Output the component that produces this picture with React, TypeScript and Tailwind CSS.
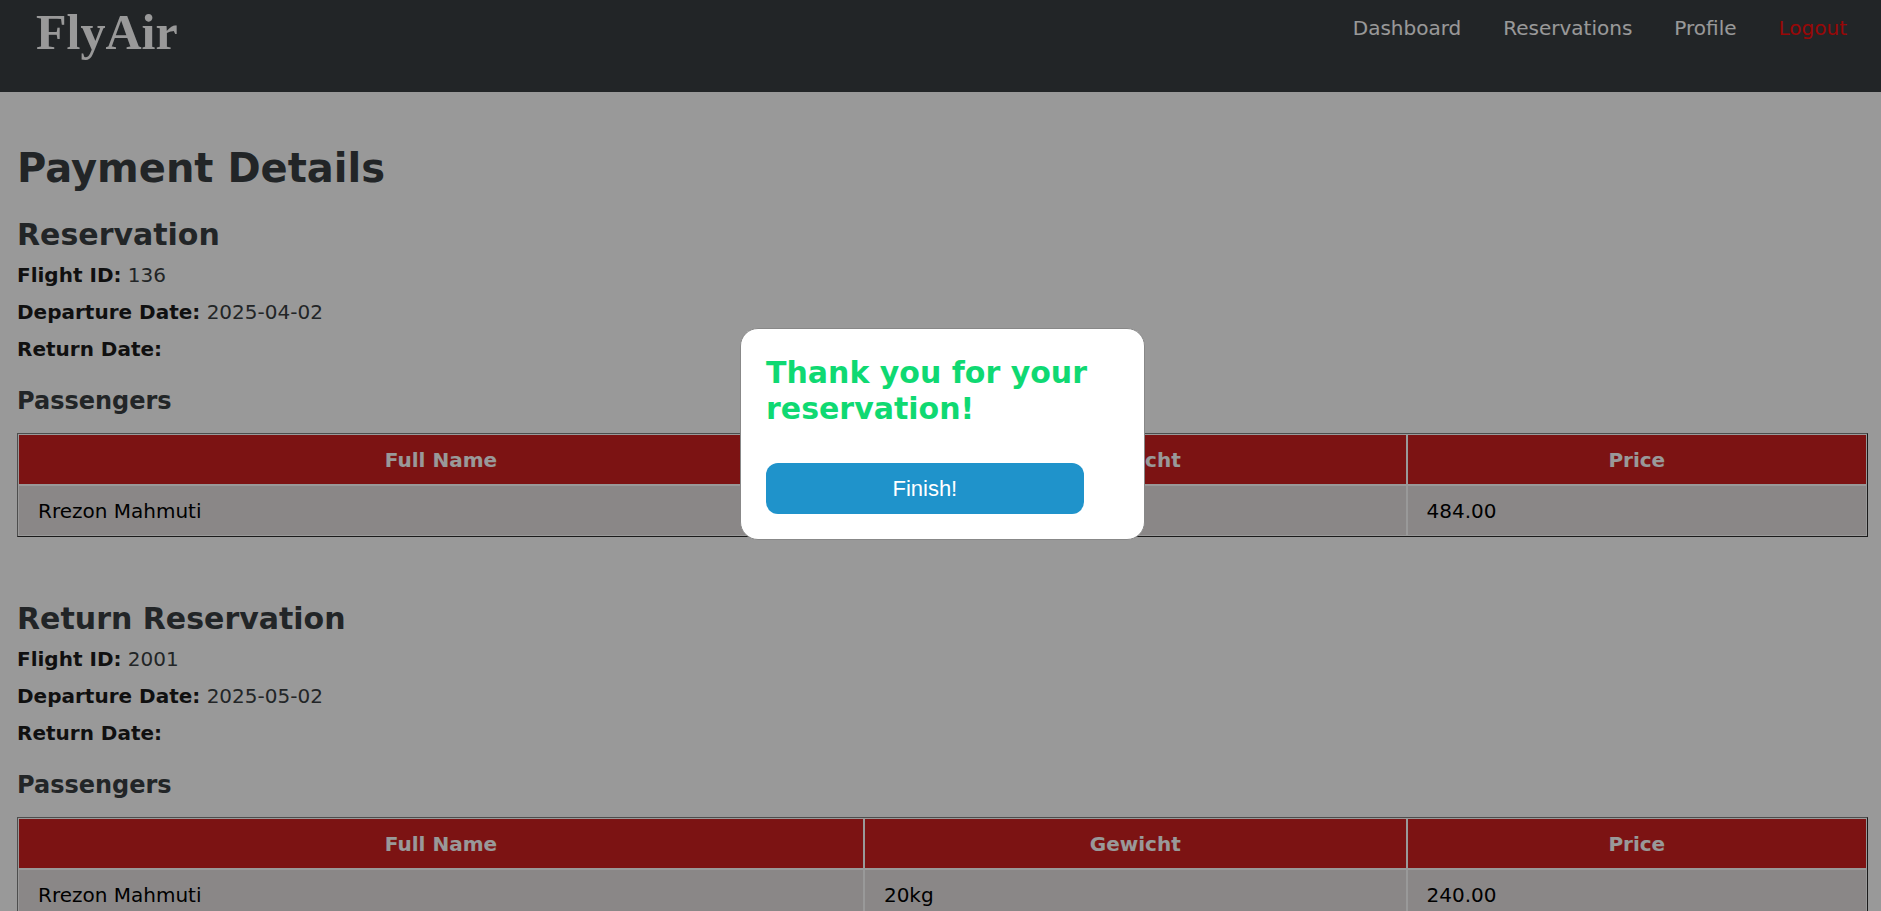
type Passenger = { name: string; weight: string; price: string };

type Reservation = {
  title: string;
  flightId: string;
  departure: string;
  returnDate: string;
  passengers: Passenger[];
};

const reservations: Reservation[] = [
  {
    title: 'Reservation',
    flightId: '136',
    departure: '2025-04-02',
    returnDate: '',
    passengers: [{ name: 'Rrezon Mahmuti', weight: '20kg', price: '484.00' }],
  },
  {
    title: 'Return Reservation',
    flightId: '2001',
    departure: '2025-05-02',
    returnDate: '',
    passengers: [{ name: 'Rrezon Mahmuti', weight: '20kg', price: '240.00' }],
  },
];

const navLinks = ['Dashboard', 'Reservations', 'Profile'];

function Header() {
  return (
    <header className="flex h-[92px] items-start justify-between bg-[#393e42] pl-9 pr-[34px] text-white">
      <a
        href="#home"
        className="pt-1 font-['Liberation_Serif',serif] text-[50px] leading-[56px] font-bold"
      >
        FlyAir
      </a>
      <nav className="flex gap-[42px] pt-4 text-[20px] leading-6">
        {navLinks.map((label) => (
          <a key={label} href={`#${label.toLowerCase()}`}>
            {label}
          </a>
        ))}
        <a href="#logout" className="text-[#ff0c0c]">
          Logout
        </a>
      </nav>
    </header>
  );
}

function Detail({ label, value }: { label: string; value: string }) {
  return (
    <p>
      <b className="text-[#1c1c1c]">{label}:</b> {value}
    </p>
  );
}

function PassengerTable({ passengers }: { passengers: Passenger[] }) {
  const head =
    'border border-white bg-[#cf2121] px-[19px] pt-[13px] pb-[11px] text-center font-bold text-white';
  const cell = 'border border-white bg-[#e6e2e2] px-[19px] pt-[13px] pb-[11px]';
  return (
    <table className="w-full border-separate border-spacing-0 border border-t-[#808080] border-r-[#2c2c2c] border-b-[#2c2c2c] border-l-[#808080] text-[20px] leading-[25px] text-black">
      <colgroup>
        <col className="w-[45.75%]" />
        <col className="w-[29.35%]" />
        <col className="w-[24.9%]" />
      </colgroup>
      <thead>
        <tr>
          <th className={head}>Full Name</th>
          <th className={head}>Gewicht</th>
          <th className={head}>Price</th>
        </tr>
      </thead>
      <tbody>
        {passengers.map((p) => (
          <tr key={p.name}>
            <td className={cell}>{p.name}</td>
            <td className={cell}>{p.weight}</td>
            <td className={cell}>{p.price}</td>
          </tr>
        ))}
      </tbody>
    </table>
  );
}

function ReservationSection({ data }: { data: Reservation }) {
  return (
    <section>
      <h2 className="text-[30px] leading-9 font-bold">{data.title}</h2>
      <div className="mt-[10px] flex flex-col gap-[13px] text-[20px] leading-6">
        <Detail label="Flight ID" value={data.flightId} />
        <Detail label="Departure Date" value={data.departure} />
        <Detail label="Return Date" value={data.returnDate} />
      </div>
      <h3 className="mt-[26px] mb-[18px] text-[24px] leading-7 font-bold">Passengers</h3>
      <PassengerTable passengers={data.passengers} />
    </section>
  );
}

function ThankYouDialog() {
  return (
    <div className="fixed inset-0 flex items-start justify-center bg-black/40 pt-[36vh] pl-1">
      <div
        role="dialog"
        aria-modal="true"
        aria-labelledby="thanks-title"
        className="w-[405px] rounded-[18px] border border-[#888888] bg-white px-[25px] pt-[26px] pb-[25px]"
      >
        <h2 id="thanks-title" className="text-[30px] leading-9 font-bold text-[#0fd972]">
          Thank you for your reservation!
        </h2>
        <button
          type="button"
          className="mt-9 block w-[90%] rounded-xl bg-[#1f93cb] py-3 font-['Liberation_Sans',sans-serif] text-[22px] leading-[27px] text-white"
        >
          Finish!
        </button>
      </div>
    </div>
  );
}

export default function App() {
  return (
    <div className="h-screen overflow-hidden bg-white font-[Verdana,'DejaVu_Sans',sans-serif] text-[#393e42]">
      <Header />
      <main className="pt-[52px] pr-[13px] pl-[17px]">
        <h1 className="mb-[25px] text-[40px] leading-[48px] font-bold">Payment Details</h1>
        <div className="flex flex-col gap-16">
          {reservations.map((r) => (
            <ReservationSection key={r.title} data={r} />
          ))}
        </div>
      </main>
      <ThankYouDialog />
    </div>
  );
}
